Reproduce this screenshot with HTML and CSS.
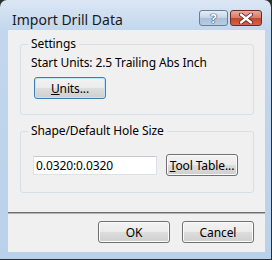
FILE: index.html
```html
<!DOCTYPE html>
<html>
<head>
    <title>Import Drill Data</title>
    <link rel="stylesheet" href="styles.css">
</head>
<body>
    <div class="window">
        <div class="titlebar">
            <span class="title">Import Drill Data</span>
            <div class="caption-buttons">
                <span class="cap-btn help">?</span>
                <span class="cap-btn close">
                    <svg width="14" height="11" viewBox="0 0 14 11">
                        <path d="M2 1.5 L12 9.5 M12 1.5 L2 9.5" stroke="#5a1a14" stroke-width="4" stroke-linecap="round"/>
                        <path d="M2 1.5 L12 9.5 M12 1.5 L2 9.5" stroke="#ffffff" stroke-width="2.4" stroke-linecap="round"/>
                    </svg>
                </span>
            </div>
        </div>
        <div class="client">
            <fieldset class="group settings">
                <legend>Settings</legend>
                <div class="info">Start Units: 2.5 Trailing Abs Inch</div>
                <button class="btn default"><u>U</u>nits...</button>
            </fieldset>
            <fieldset class="group hole">
                <legend>Shape/Default Hole Size</legend>
                <div class="row">
                    <input type="text" class="field" value="0.0320:0.0320">
                    <button class="btn"><u>T</u>ool Table...</button>
                </div>
            </fieldset>
            <div class="footer">
                <button class="btn">OK</button>
                <button class="btn">Cancel</button>
            </div>
        </div>
    </div>
</body>
</html>
```

FILE: styles.css
```css
body {
    margin: 0;
    background: #2e2e2e;
    font-family: "Segoe UI", "Noto Sans", sans-serif;
    font-size: 12px;
    letter-spacing: -0.1px;
    color: #000;
}

/* window frame */
.window {
    width: 271px;
    height: 259px;
    box-sizing: border-box;
    padding: 0 6px 7px 8px;
    border-radius: 7px 7px 0 0;
    background: linear-gradient(#dbe7f4, #c2d7ed 30px, #b9d1ea);
    display: flex;
    flex-direction: column;
}

.titlebar {
    height: 30px;
    display: flex;
    justify-content: space-between;
    align-items: flex-start;
}

.title {
    margin: 11px 0 0 4px;
    font-size: 14px;
    line-height: 18px;
    letter-spacing: 0;
    color: #1a1a1a;
}

.caption-buttons {
    display: flex;
    gap: 2px;
    margin: 10px 3px 0 0;
}

.cap-btn {
    height: 16px;
    box-sizing: border-box;
    border: 1px solid #6b7d92;
    border-radius: 3px;
    display: flex;
    align-items: center;
    justify-content: center;
}

.help {
    width: 29px;
    background: linear-gradient(#e4edf7, #c4d5e8 50%, #a9c0da 51%, #b9cde3);
    color: #fff;
    font-weight: bold;
    font-size: 13px;
    text-shadow: 0 0 1px #273b55, 0 0 1px #273b55, 0 0 1px #273b55;
}

.close {
    width: 32px;
    border-color: #6e2a22;
    background: linear-gradient(#e9a99a, #d47a66 50%, #c2452c 51%, #d2644a);
}

/* dialog body */
.client {
    flex: 1;
    background: #f0f0f0;
    display: flex;
    flex-direction: column;
    padding-top: 7px;
}

.group {
    margin: 0 11px 0 12px;
    padding: 0 12px;
    border: 1px solid #d5dfe5;
    border-radius: 3px;
}

.group legend {
    padding: 0 3px;
    margin-left: -5px;
    line-height: 14px;
}

.settings {
    padding-top: 4px;
    padding-bottom: 15px;
}

.info {
    line-height: 16px;
    margin-left: -2px;
}

.settings .btn {
    margin-top: 6px;
    margin-left: 1px;
}

.hole {
    margin-top: 9px;
    padding-top: 16px;
    padding-bottom: 16px;
}

.row {
    display: flex;
    align-items: center;
    gap: 9px;
}

.field {
    width: 124px;
    height: 19px;
    box-sizing: border-box;
    margin: 0;
    padding: 0 2px;
    border: 1px solid #dde1e6;
    border-top-color: #c6cad0;
    background: #fff;
    font: inherit;
    letter-spacing: inherit;
}

.btn {
    width: 72px;
    height: 22px;
    padding: 0;
    border: 1px solid #707070;
    border-radius: 3px;
    background: linear-gradient(#f2f2f2, #ebebeb 50%, #dddddd 50%, #cfcfcf);
    box-shadow: inset 0 0 0 1px #fcfcfc;
    font: inherit;
    letter-spacing: inherit;
    color: #000;
}

.btn.default {
    border-color: #3c7fb1;
    box-shadow: inset 0 0 0 1px #bfe6f7;
}

.footer {
    margin-top: 19px;
    border-top: 1px solid #6f6f6f;
    box-shadow: inset 0 1px #b4b4b4;
    padding: 8px 11px 9px 0;
    display: flex;
    justify-content: flex-end;
    gap: 12px;
}
```
